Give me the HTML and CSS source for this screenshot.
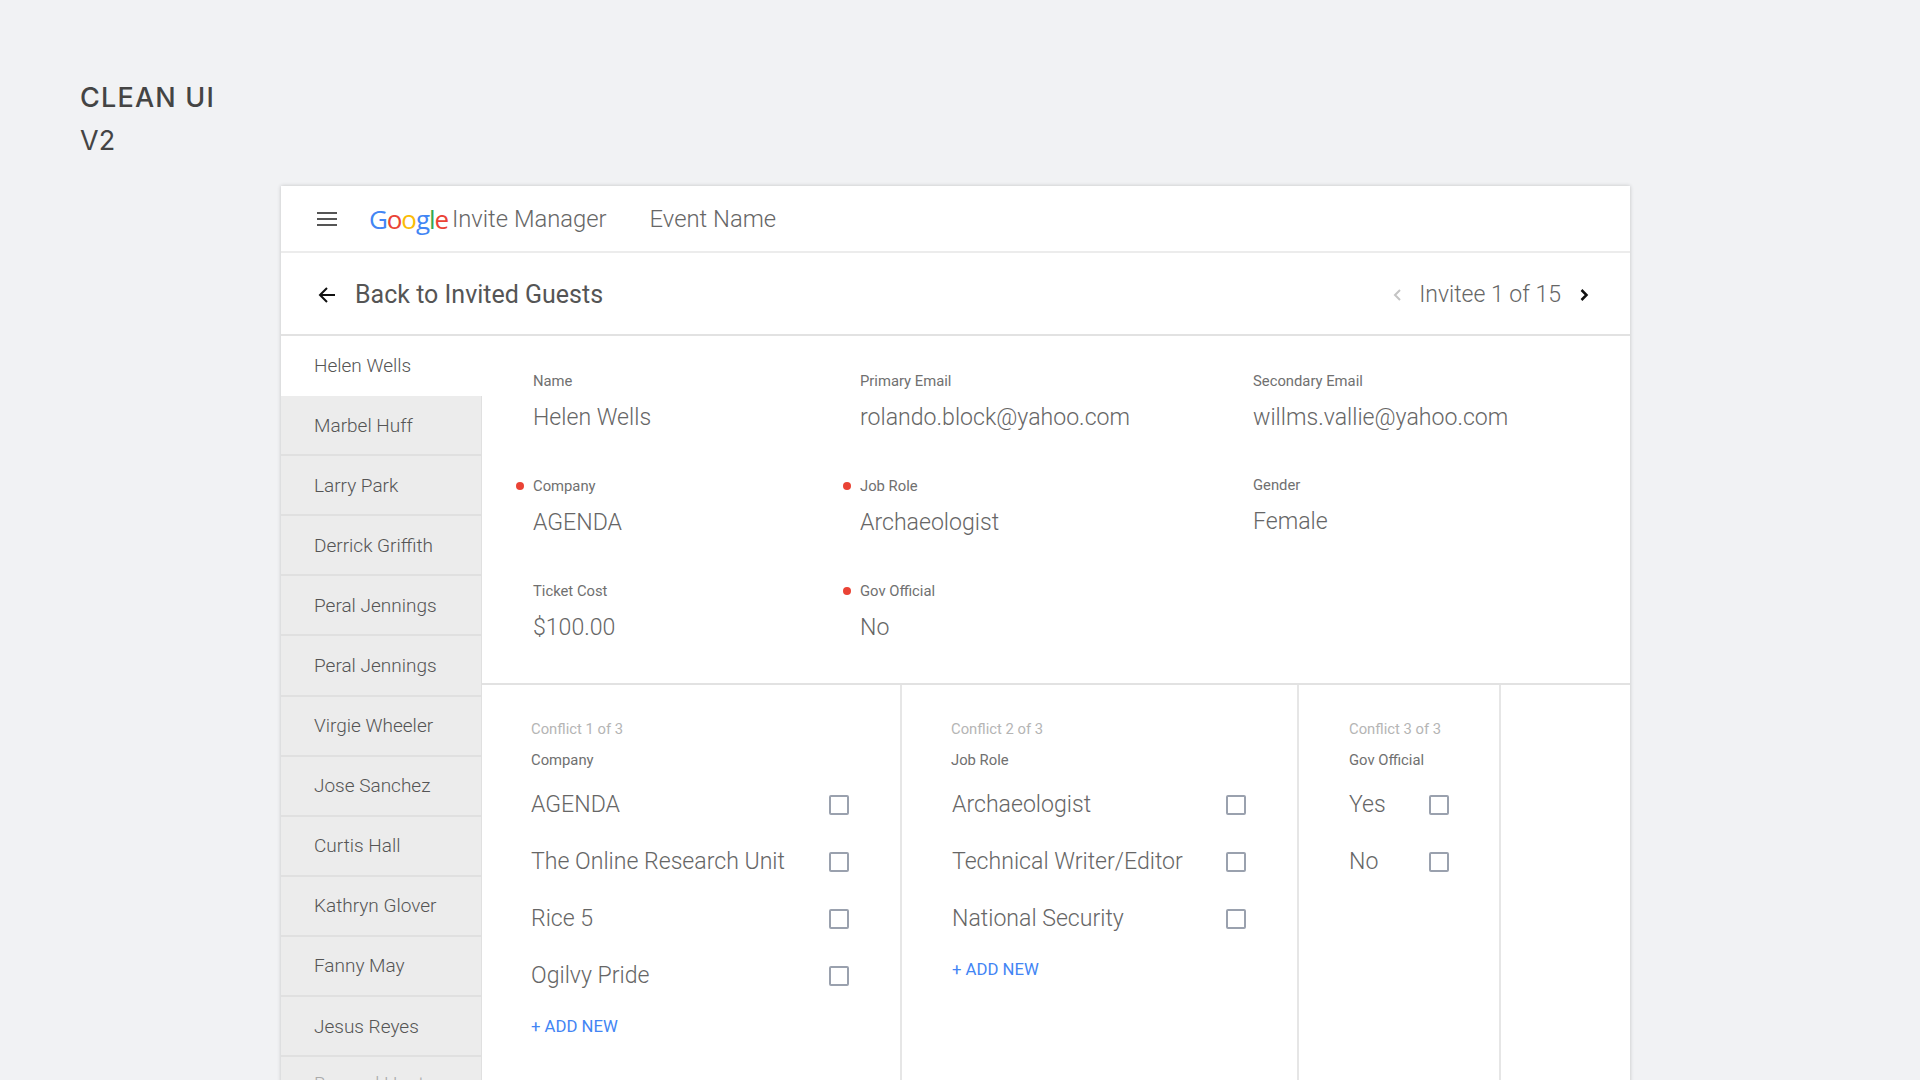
FILE: index.html
```html
<!DOCTYPE html>
<html lang="en">
<head>
  <meta charset="UTF-8" />
  <title>Clean UI V2</title>
  <link rel="stylesheet" href="styles.css">
</head>
<body>
  <div class="page-title">
    <h1>CLEAN UI</h1>
    <div class="version">V2</div>
  </div>

  <div class="card">
    <div class="topbar">
      <svg class="menu-icon" width="20" height="14" viewBox="0 0 20 14"><path d="M0 1h20M0 7h20M0 13h20" stroke="#555" stroke-width="2"/></svg>
      <div class="logo"><span class="g-blue">G</span><span class="g-red">o</span><span class="g-yellow">o</span><span class="g-blue">g</span><span class="g-green">l</span><span class="g-red">e</span></div>
      <div class="app-name">Invite Manager</div>
      <div class="event-name">Event Name</div>
    </div>

    <div class="subbar">
      <svg class="back-icon" width="18" height="18" viewBox="0 0 18 18"><path d="M17 9H2M9 2L2 9l7 7" fill="none" stroke="#111" stroke-width="2"/></svg>
      <div class="back-text">Back to Invited Guests</div>
      <div class="pager">
        <svg width="9" height="14" viewBox="0 0 9 14"><path d="M8 2L3 7l5 5" fill="none" stroke="#c4c4c4" stroke-width="2"/></svg>
        <span class="pager-text">Invitee 1 of 15</span>
        <svg width="9" height="14" viewBox="0 0 9 14"><path d="M1.5 2l5 5-5 5" fill="none" stroke="#111" stroke-width="2.5"/></svg>
      </div>
    </div>

    <div class="main">
      <div class="sidebar">
        <div class="guest active">Helen Wells</div>
        <div class="guest">Marbel Huff</div>
        <div class="guest">Larry Park</div>
        <div class="guest">Derrick Griffith</div>
        <div class="guest">Peral Jennings</div>
        <div class="guest">Peral Jennings</div>
        <div class="guest">Virgie Wheeler</div>
        <div class="guest">Jose Sanchez</div>
        <div class="guest">Curtis Hall</div>
        <div class="guest">Kathryn Glover</div>
        <div class="guest">Fanny May</div>
        <div class="guest">Jesus Reyes</div>
        <div class="guest">Bernard Hunt</div>
      </div>

      <div class="content">
        <div class="fields">
          <div class="field"><div class="label">Name</div><div class="value">Helen Wells</div></div>
          <div class="field"><div class="label">Primary Email</div><div class="value">rolando.block@yahoo.com</div></div>
          <div class="field"><div class="label">Secondary Email</div><div class="value">willms.vallie@yahoo.com</div></div>
          <div class="field flagged"><div class="label">Company</div><div class="value">AGENDA</div></div>
          <div class="field flagged"><div class="label">Job Role</div><div class="value">Archaeologist</div></div>
          <div class="field raised"><div class="label">Gender</div><div class="value">Female</div></div>
          <div class="field"><div class="label">Ticket Cost</div><div class="value">$100.00</div></div>
          <div class="field flagged"><div class="label">Gov Official</div><div class="value">No</div></div>
        </div>

        <div class="conflicts">
          <div class="conflict col-1">
            <div class="conflict-count">Conflict 1 of 3</div>
            <div class="conflict-name">Company</div>
            <div class="option"><span>AGENDA</span><i class="checkbox"></i></div>
            <div class="option"><span>The Online Research Unit</span><i class="checkbox"></i></div>
            <div class="option"><span>Rice 5</span><i class="checkbox"></i></div>
            <div class="option"><span>Ogilvy Pride</span><i class="checkbox"></i></div>
            <div class="add-new">+ ADD NEW</div>
          </div>
          <div class="conflict col-2">
            <div class="conflict-count">Conflict 2 of 3</div>
            <div class="conflict-name">Job Role</div>
            <div class="option"><span>Archaeologist</span><i class="checkbox"></i></div>
            <div class="option"><span>Technical Writer/Editor</span><i class="checkbox"></i></div>
            <div class="option"><span>National Security</span><i class="checkbox"></i></div>
            <div class="add-new">+ ADD NEW</div>
          </div>
          <div class="conflict col-3">
            <div class="conflict-count">Conflict 3 of 3</div>
            <div class="conflict-name">Gov Official</div>
            <div class="option"><span>Yes</span><i class="checkbox"></i></div>
            <div class="option"><span>No</span><i class="checkbox"></i></div>
          </div>
        </div>
      </div>
    </div>
  </div>
</body>
</html>
```

FILE: styles.css
```css
* { margin: 0; padding: 0; box-sizing: border-box; }
html, body {
  height: 100%;
  overflow: hidden;
  background: #f1f2f4;
  font-family: Roboto, sans-serif;
  color: #666;
}
.page-title {
  height: 186px;
  padding: 81px 0 0 80px;
  color: #444;
}
h1 {
  font-family: Inter, sans-serif;
  font-size: 27px;
  font-weight: 500;
  line-height: 34px;
  letter-spacing: 1.2px;
}
.version {
  font-family: Inter, sans-serif;
  font-size: 27px;
  font-weight: 400;
  line-height: 34px;
  margin-top: 9px;
}
.card {
  width: 1349px;
  margin-left: 281px;
  background: white;
  box-shadow: 0 0 4px rgba(0, 0, 0, 0.2);
}

.topbar {
  height: 67px;
  display: flex;
  align-items: center;
  padding: 1px 0 0 36px;
  border-bottom: 2px solid #ececec;
}
.menu-icon { margin-right: 32px; }
.logo {
  font-family: "Open Sans", sans-serif;
  font-size: 26px;
  font-weight: 500;
  letter-spacing: -1.1px;
  margin-right: 4px;
}
.g-blue { color: #4285f4; }
.g-red { color: #ea4335; }
.g-yellow { color: #fbbc05; }
.g-green { color: #34a853; }
.app-name, .event-name { font-size: 23.8px; font-weight: 300; color: #666; }
.app-name { margin-right: 43px; }

.subbar {
  height: 83px;
  display: flex;
  align-items: center;
  padding: 2px 41px 0 37px;
  border-bottom: 2px solid #e2e2e2;
}
.back-icon { margin-right: 19px; }
.back-text { font-size: 25px; color: #555; }
.pager { margin-left: auto; display: flex; align-items: center; }
.pager-text { font-size: 23px; font-weight: 300; margin: 0 19px 0 18px; }

.main { display: flex; }
.sidebar { width: 201px; flex-shrink: 0; }
.guest {
  height: 60.1px;
  padding-left: 33px;
  display: flex;
  align-items: center;
  font-size: 19px;
  font-weight: 300;
  background: #ececec;
  border-bottom: 2px solid #e0e0e0;
  border-right: 1px solid #e0e0e0;
  color: #555;
}
.guest.active { background: white; border-color: white; }
.guest:last-child { color: #aaa; padding-bottom: 6px; }

.content { flex: 1; }
.fields {
  height: 349px;
  display: grid;
  grid-template-columns: 327px 393px 1fr;
  grid-auto-rows: 105px;
  padding: 35px 0 0 51px;
  border-bottom: 2px solid #e2e2e2;
}
.field { position: relative; }
.field.raised { top: -1px; }
.flagged::before {
  content: "";
  position: absolute;
  left: -17px;
  top: 6px;
  width: 8px;
  height: 8px;
  border-radius: 50%;
  background: #ea4335;
}
.label { font-size: 14.8px; line-height: 20px; color: #707070; margin-bottom: 11px; }
.value { font-size: 23.1px; font-weight: 300; line-height: 32px; }

.conflicts { display: flex; height: 400px; }
.conflict {
  padding-top: 34px;
  border-right: 2px solid #e6e6e6;
}
.col-1 { width: 420px; padding-left: 49px; padding-right: 51px; }
.col-2 { width: 397px; padding-left: 49px; padding-right: 51px; }
.col-3 { width: 202px; padding-left: 50px; padding-right: 50px; }
.conflict-count { font-size: 14.8px; line-height: 20px; color: #b5b5b5; }
.conflict-name { font-size: 14.8px; line-height: 20px; color: #707070; margin-top: 11px; margin-bottom: 6px; }
.option {
  height: 57px;
  display: flex;
  align-items: center;
  justify-content: space-between;
  font-size: 23.1px;
  font-weight: 300;
}
.checkbox {
  width: 20px;
  height: 20px;
  border: 2px solid #9aa1ae;
  border-radius: 2px;
}
.col-2 .option span { padding-left: 1px; }
.col-2 .add-new { padding-left: 1px; }
.add-new { font-size: 16.7px; color: #4285f4; margin-top: 13px; }
```
